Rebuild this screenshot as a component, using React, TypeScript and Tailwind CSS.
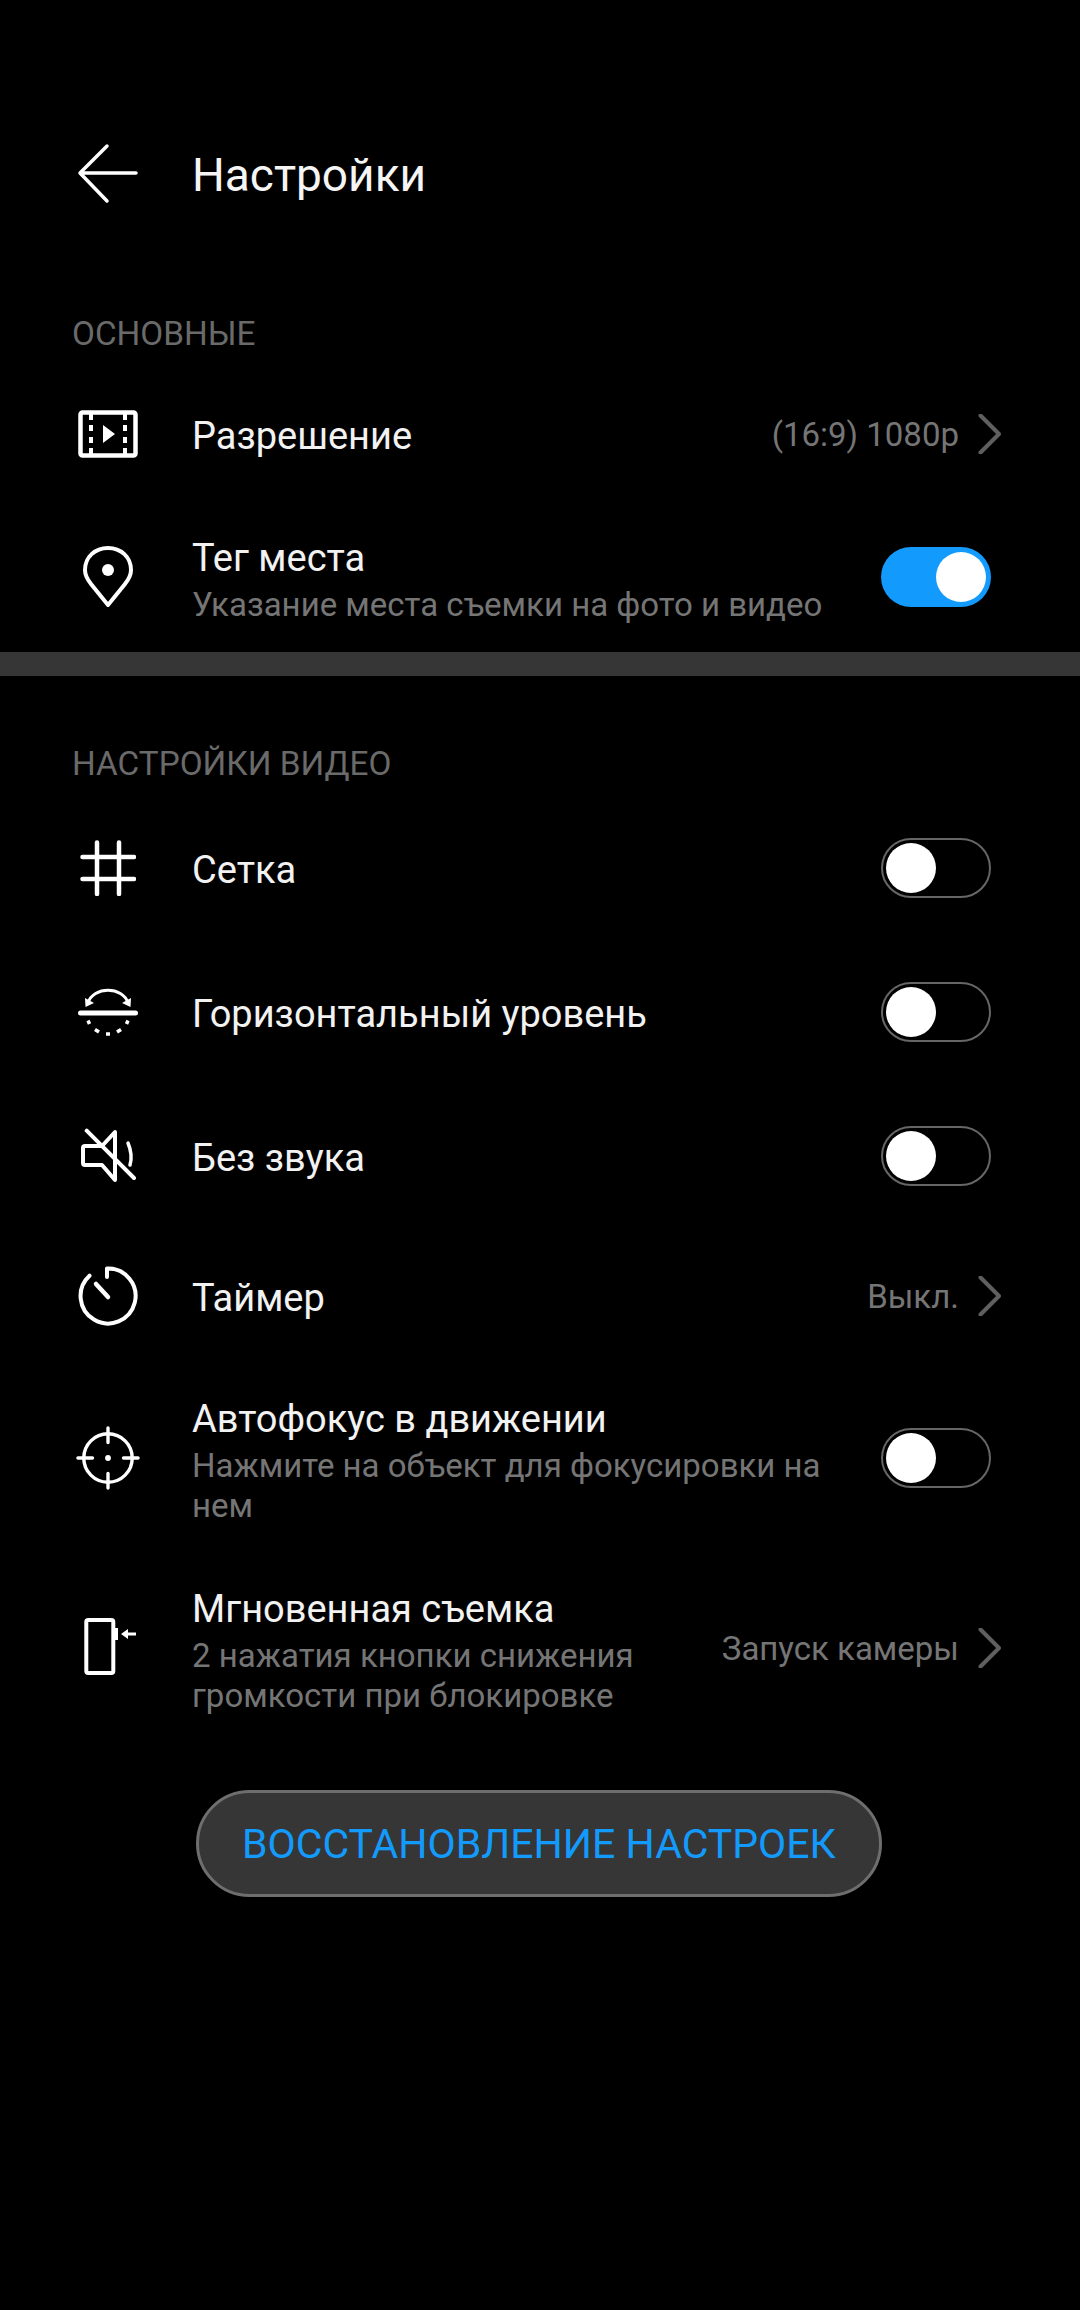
import React from "react";

function Toggle({ on }: { on?: boolean }) {
  return on ? (
    <div className="w-[110px] h-[60px] rounded-full bg-[#129bfc] flex items-center justify-end pr-[5px] shrink-0 ml-[1px]">
      <div className="w-[50px] h-[50px] rounded-full bg-white" />
    </div>
  ) : (
    <div className="w-[110px] h-[60px] rounded-full border-[2.5px] border-[#666666] bg-black flex items-center pl-[3px] shrink-0 ml-[1px]">
      <div className="w-[50px] h-[50px] rounded-full bg-white" />
    </div>
  );
}

function Chevron() {
  return (
    <svg width="24" height="40" viewBox="0 0 24 40" fill="none" className="shrink-0 ml-[19px] mr-[-11px]">
      <path d="M2.5 1.5 L21 20 L2.5 38.5" stroke="#5f5f5f" strokeWidth="4" strokeLinecap="round" strokeLinejoin="round" />
    </svg>
  );
}

function IconBox({ children }: { children: React.ReactNode }) {
  return <div className="w-[64px] h-[64px] shrink-0 mr-[52px] ml-[-4px] flex items-center justify-center">{children}</div>;
}

function Row({ icon, title, sub, value, toggle, h }: { icon: React.ReactNode; title: string; sub?: string[]; value?: string; toggle?: "on" | "off"; h: string }) {
  return (
    <div className={`flex items-center pl-[80px] pr-[89px] ${h}`}>
      <IconBox>{icon}</IconBox>
      <div className={`flex-1 min-w-0 ${sub ? "pt-[1px]" : "pt-[3px]"}`}>
        <div className="text-[38px] leading-[54px] text-[#f2f2f2] whitespace-nowrap">{title}</div>
        {sub && sub.map((t) => (
          <div key={t} className="text-[33px] leading-[40px] text-[#757575] whitespace-nowrap">{t}</div>
        ))}
      </div>
      {value && <div className="text-[33px] leading-[40px] pt-[2px] text-[#757575] whitespace-nowrap">{value}</div>}
      {value && <Chevron />}
      {toggle && <Toggle on={toggle === "on"} />}
    </div>
  );
}

const s = { stroke: "white", strokeWidth: 4, fill: "none", strokeLinecap: "round" as const, strokeLinejoin: "round" as const };

export default function App() {
  return (
    <div className="w-[1080px] h-[2310px] bg-black text-white overflow-hidden" style={{ fontFamily: "Roboto, sans-serif" }}>
      <div className="h-[119px]" />
      <div className="h-[110px] flex items-center pl-[76px]">
        <svg width="64" height="64" viewBox="0 0 64 64" className="shrink-0 mr-[52px]">
          <path d="M31 4 L4 31 L31 59 M4 31 H60" {...s} strokeWidth={3.5} />
        </svg>
        <div className="text-[46px] pt-[2px] text-[#f5f5f5]">Настройки</div>
      </div>
      <div className="h-[84px]" />
      <div className="pl-[72px] h-[40px] pt-[2px] flex items-center text-[33.3px] text-[#6a6a6a]">ОСНОВНЫЕ</div>
      <Row h="h-[162px]" title="Разрешение" value="(16:9) 1080p" icon={
        <svg width="60" height="48" viewBox="0 0 60 48">
          <rect x="2.5" y="2.5" width="55" height="43" rx="2" {...s} strokeWidth={4.5} />
          <path d="M13 3V10M13 15V21M13 27V33M13 38V45M47 3V10M47 15V21M47 27V33M47 38V45" {...s} strokeLinecap="butt" />
          <path d="M25 15 L37 24 L25 33Z" fill="white" />
        </svg>} />
      <Row h="h-[124px]" title="Тег места" sub={["Указание места съемки на фото и видео"]} toggle="on" icon={
        <svg width="50" height="62" viewBox="0 0 50 62">
          <path d="M25 59 L8 38 C4 33 2 29 2 24 C2 11 12 2 25 2 C38 2 48 11 48 24 C48 29 46 33 42 38 Z" {...s} />
          <circle cx="25" cy="24" r="6" fill="white" />
        </svg>} />
      <div className="h-[24px] mt-[13px] bg-[#363636]" />
      <div className="h-[67px]" />
      <div className="pl-[72px] h-[40px] pt-[2px] flex items-center text-[33.3px] text-[#6a6a6a]">НАСТРОЙКИ ВИДЕО</div>
      <div className="h-[13px]" />
      <Row h="h-[144px]" title="Сетка" toggle="off" icon={
        <svg width="56" height="56" viewBox="0 0 56 56">
          <path d="M17 2.5V54M39 2.5V54M2.5 17H54M2.5 39H54" {...s} strokeWidth={4.5} />
        </svg>} />
      <Row h="h-[144px]" title="Горизонтальный уровень" toggle="off" icon={
        <svg width="60" height="48" viewBox="0 0 60 48">
          <path d="M10 15 C15 -2 45 -2 50 15" {...s} strokeWidth={3} />
          <path d="M7 10 L7.5 19 L16 15Z M53 10 L52.5 19 L44 15Z" fill="white" />
          <path d="M2.5 25H57.5" {...s} strokeWidth={5} />
          <path d="M10 32.5L11.5 36M17 41.5L21 44M28 46H32M39 44L43 41.5M48.5 36L50 32.5" {...s} strokeWidth={3.5} strokeLinecap="butt" />
        </svg>} />
      <Row h="h-[144px]" title="Без звука" toggle="off" icon={
        <svg width="60" height="56" viewBox="0 0 60 56">
          <path d="M37 4 L24 18 H7 Q5 18 5 20 V35 Q5 37 7 37 H24 L37 52Z" {...s} />
          <path d="M50 15 Q55 27 52 37" {...s} strokeWidth={3.5} />
          <path d="M8.7 2.7L56 50" {...s} />
        </svg>} />
      <Row h="h-[136px]" title="Таймер" value="Выкл." icon={
        <svg width="64" height="64" viewBox="0 0 64 64">
          <path d="M31 13 V4.5 A27.5 27.5 0 1 1 13.5 11.7" {...s} />
          <path d="M20 20L32 33" {...s} strokeWidth={4.5} />
        </svg>} />
      <Row h="h-[188px]" title="Автофокус в движении" sub={["Нажмите на объект для фокусировки на", "нем"]} toggle="off" icon={
        <svg width="66" height="66" viewBox="0 0 66 66">
          <circle cx="33" cy="33" r="25" {...s} strokeWidth={3.5} />
          <path d="M33 2V17M33 49V64M2 33H17M49 33H64" {...s} strokeWidth={3.5} />
          <circle cx="33" cy="33" r="3" fill="white" />
        </svg>} />
      <div className="flex items-center pl-[80px] pr-[89px] h-[192px]">
        <IconBox>
          <svg width="60" height="60" viewBox="0 0 60 60">
            <rect x="8.3" y="2" width="27" height="53" rx="2" {...s} />
            <path d="M37 10H40V22H37Z" fill="white" />
            <path d="M43 16L50 11V14.5H58V17.5H50V21Z" fill="white" />
          </svg>
        </IconBox>
        <div className="flex-1 min-w-0 pt-[1px]">
          <div className="text-[38px] leading-[54px] text-[#f2f2f2] whitespace-nowrap">Мгновенная съемка</div>
          <div className="text-[33px] leading-[40px] text-[#757575] whitespace-nowrap">2 нажатия кнопки снижения</div>
          <div className="text-[33px] leading-[40px] text-[#757575] whitespace-nowrap">громкости при блокировке</div>
        </div>
        <div className="text-[33px] leading-[40px] pt-[2px] text-[#757575] whitespace-nowrap">Запуск камеры</div>
        <Chevron />
      </div>
      <div className="flex justify-center mt-[46px] pr-[2px]">
        <div className="w-[686px] h-[107px] rounded-full bg-[#363636] border-[3px] border-[#6e6e6e] pt-[3px] flex items-center justify-center text-[41px] text-[#129bfc] whitespace-nowrap">
          ВОССТАНОВЛЕНИЕ НАСТРОЕК
        </div>
      </div>
    </div>
  );
}
